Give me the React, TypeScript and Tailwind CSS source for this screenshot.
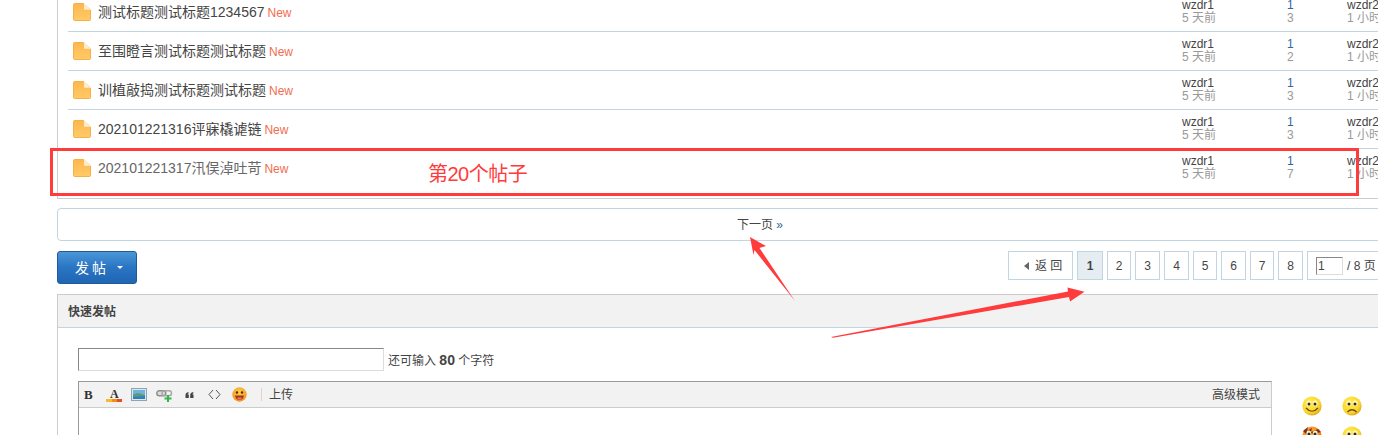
const font = { fontFamily: '"Liberation Sans", "Noto Sans CJK SC", sans-serif' };

const rows = [
  { title: "测试标题测试标题1234567", replies: 3 },
  { title: "至围瞪言测试标题测试标题", replies: 2 },
  { title: "训植敲捣测试标题测试标题", replies: 3 },
  { title: "202101221316评寐橇谑链", replies: 3 },
  { title: "202101221317汛俣淖吐苛", replies: 7 },
];

const pages = [
  { n: 1, w: "w-[26px]" },
  { n: 2, w: "w-[24px]" },
  { n: 3, w: "w-[25px]" },
  { n: 4, w: "w-[25px]" },
  { n: 5, w: "w-[24px]" },
  { n: 6, w: "w-[25px]" },
  { n: 7, w: "w-[24px]" },
  { n: 8, w: "w-[25px]" },
];

function FileIcon() {
  return (
    <svg width="18" height="18" viewBox="0 0 18 18" className="shrink-0">
      <defs>
        <linearGradient id="fileFill" x1="0" y1="0" x2="0" y2="1">
          <stop offset="0" stopColor="#fdb64f" />
          <stop offset="1" stopColor="#ffcb66" />
        </linearGradient>
      </defs>
      <path d="M1.5 0.5H10.5L17.5 7V16.5a1 1 0 0 1-1 1H1.5a1 1 0 0 1-1-1V1.5a1 1 0 0 1 1-1Z" fill="url(#fileFill)" stroke="#f5b04a" />
      <path d="M11 0.5L17.5 6.8H11Z" fill="#fdeecb" />
    </svg>
  );
}

function Smiley({ kind }: { kind: "smile" | "sad" | "angry" | "shock" }) {
  const id = `face-${kind}`;
  return (
    <svg width="20" height="20" viewBox="0 0 20 20" className="overflow-visible">
      <defs>
        <radialGradient id={id} cx="0.4" cy="0.35" r="0.7">
          <stop offset="0" stopColor={kind === "angry" ? "#fbb03b" : "#fff04a"} />
          <stop offset="0.7" stopColor={kind === "angry" ? "#f58a1f" : "#fbd52a"} />
          <stop offset="1" stopColor={kind === "angry" ? "#d9601a" : "#d9a020"} />
        </radialGradient>
      </defs>
      <circle cx="10" cy="10" r="9.6" fill={`url(#${id})`} />
      {kind === "angry" && <path d="M1 5L6 1L5 5L10 2L9 6L16 3L19 6L12 8L8 7L5 9Z" fill="#8a2a10" />}
      <ellipse cx="6.8" cy="7.4" rx="2.4" ry="2.8" fill="#fff6d0" />
      <ellipse cx="13.200" cy="7.4" rx="2.4" ry="2.8" fill="#fff6d0" />
      <circle cx="7" cy="8" r="1.5" fill="#3a2a10" />
      <circle cx="13" cy="8" r="1.5" fill="#3a2a10" />
      {kind === "sad" ? (
        <path d="M5.500 16Q10 11.500 14.500 16" fill="none" stroke="#6b4a10" strokeWidth="1.200" />
      ) : (
        <path d="M4 12Q10 18.500 16 12" fill="none" stroke="#6b4a10" strokeWidth="1.200" />
      )}
    </svg>
  );
}

function Toolbar() {
  return (
    <div className="flex h-[26px] items-center border-b border-[#cccccc] bg-[#f2f2f2] text-xs text-[#444]">
      <svg width="16" height="16" viewBox="0 0 16 16" className="ml-[2px]">
        <text x="3" y="11.500" fontSize="13" fontWeight="700" fontFamily="Liberation Serif" fill="#333">B</text>
      </svg>
      <svg width="16" height="18" viewBox="0 0 16 18" className="ml-[9px]">
        <text x="4" y="12" fontSize="12" fontWeight="700" fontFamily="Liberation Serif" fill="#333">A</text>
        <rect x="0" y="13" width="6" height="3" fill="#fbb829" />
        <rect x="6" y="13" width="5" height="3" fill="#f58a1f" />
        <rect x="11" y="13" width="5" height="3" fill="#e2531a" />
      </svg>
      <svg width="16" height="13" viewBox="0 0 16 13" className="ml-[9px]">
        <rect x="0.5" y="0.5" width="15" height="12" fill="#dfe8ee" stroke="#8ea3b3" />
        <rect x="2" y="2" width="12" height="9" fill="#6fb3dc" />
        <path d="M2 6.500L7 5L14 7V11H2Z" fill="#5a9a78" />
        <path d="M2 9L14 8V11H2Z" fill="#2f7fc0" />
      </svg>
      <svg width="17" height="15" viewBox="0 0 17 15" className="ml-[9px] mt-[3px]">
        <rect x="0.800" y="1.800" width="9" height="5" rx="2.500" fill="#ddd" stroke="#8f8f8f" strokeWidth="1.500" />
        <rect x="6" y="1.800" width="9.500" height="5" rx="2.500" fill="none" stroke="#a8a8a8" strokeWidth="1.500" />
        <path d="M11 6h2v2.500h2.500v2H13V13h-2v-2.500H8.500v-2H11Z" fill="#35b44a" />
      </svg>
      <svg width="9" height="8" viewBox="0 0 9 8" className="ml-[12px]">
        <path d="M0.500 7V4Q0.500 1.500 3.500 1V2.500Q2.500 2.800 2.500 3.500H3.800V7ZM5.200 7V4Q5.200 1.500 8.300 1V2.500Q7.300 2.800 7.300 3.500H8.500V7Z" fill="#444" />
      </svg>
      <svg width="13" height="11" viewBox="0 0 13 11" className="ml-[14px]">
        <path d="M5 1L1 5.500L5 10M8 1L12 5.500L8 10" fill="none" stroke="#555" strokeWidth="1" />
      </svg>
      <svg width="15" height="15" viewBox="0 0 15 15" className="ml-[11px]">
        <defs>
          <radialGradient id="tongueFace" cx="0.5" cy="0.35" r="0.7">
            <stop offset="0" stopColor="#fdd24a" />
            <stop offset="1" stopColor="#ee8a1c" />
          </radialGradient>
        </defs>
        <circle cx="7.500" cy="7.500" r="7.200" fill="url(#tongueFace)" />
        <circle cx="5" cy="5.500" r="1.200" fill="#5a2a08" />
        <circle cx="10" cy="5.500" r="1.200" fill="#5a2a08" />
        <path d="M3 8.500H12Q11 13 7.500 13Q4 13 3 8.500Z" fill="#a8341a" />
        <path d="M5.500 10.500H9.500V12.500H5.500Z" fill="#f37a5a" />
      </svg>
      <span className="ml-[14px] h-[13px] w-px bg-[#ecd0c8]" />
      <span className="ml-[7px]">上传</span>
      <span className="ml-auto mr-[11px]">高级模式</span>
    </div>
  );
}

export default function App() {
  return (
    <div className="relative h-[435px] w-[1378px] overflow-hidden bg-white text-xs text-[#444]" style={font}>
      <div className="-mt-[7px] ml-[57px] w-[1406px]">
        <div className="border-b border-l border-[#cccccc] pb-[11px] pl-[10px]">
          {rows.map((r, i) => (
            <div
              key={r.title}
              className={`flex items-center pl-[5px] ${i < rows.length - 1 ? "h-[39px] border-b border-[#c2d5e3]" : "h-[38px]"}`}
            >
              <FileIcon />
              <span className={`ml-[7px] text-sm ${i === 4 ? "text-[#666]" : "text-[#444]"}`}>{r.title}</span>
              <span className="ml-[3px] mt-[2px] text-xs text-[#f26c4f]">New</span>
              <div className="ml-auto flex w-[281px] shrink-0 leading-[13px]">
                <div className="w-[105px]">
                  <div className="text-[#444]">wzdr1</div>
                  <div className="text-[#999]">5 天前</div>
                </div>
                <div className="w-[60px]">
                  <div className="text-[#369]">1</div>
                  <div className="text-[#999]">{r.replies}</div>
                </div>
                <div className="w-[116px] whitespace-nowrap">
                  <div className="text-[#444]">wzdr2</div>
                  <div className="text-[#999]">1 小时前</div>
                </div>
              </div>
            </div>
          ))}
        </div>

        <div className="mt-[9px] flex h-[33px] items-center justify-center rounded-[4px] border border-[#c2d5e3] text-xs text-[#444]">
          下一页&nbsp;<span className="text-[#369]">»</span>
        </div>

        <div className="mt-[10px] flex items-start justify-between">
          <button className="flex h-[33px] w-[80px] items-center justify-start rounded-[3px] border border-[#235994] bg-gradient-to-b from-[#4a96d8] via-[#2a75c2] to-[#1f66b4] pl-[17px] text-sm tracking-[3px] text-white">
            发帖
            <span className="ml-[8px] h-0 w-0 border-x-[3px] border-t-[3px] border-x-transparent border-t-white" />
          </button>
          <div className="flex gap-1 text-xs text-[#444]">
            <div className="flex h-[29px] w-[65px] items-center border border-[#c2d5e3] pl-[15px]">
              <span className="mr-[6px] h-0 w-0 border-y-[4px] border-r-[5px] border-y-transparent border-r-[#666]" />
              返 回
            </div>
            {pages.map((p) => (
              <div
                key={p.n}
                className={`flex h-[29px] items-center justify-center border border-[#c2d5e3] ${p.w} ${p.n === 1 ? "bg-[#e5edf2] font-bold" : ""}`}
              >
                {p.n}
              </div>
            ))}
            <div className="flex h-[29px] w-[156px] items-center border border-[#c2d5e3] pl-2">
              <input
                readOnly
                value="1"
                className="h-[18px] w-[27px] border border-t-[#888] border-r-[#ddd] border-b-[#ddd] border-l-[#888] px-[1px] text-xs text-[#444]"
              />
              <span className="ml-1">/ 8 页</span>
            </div>
          </div>
        </div>

        <div className="mt-[10px] border-l border-[#cccccc]">
          <div className="flex h-[34px] items-center border-t border-b border-t-[#cccccc] border-b-[#c2d5e3] bg-[#f2f2f2] pl-[10px] pt-[2px] text-xs font-bold text-[#444]">
            快速发帖
          </div>
          <div className="flex pl-5 pt-5">
            <div className="w-[1194px] shrink-0">
              <div className="flex items-center">
                <div className="h-[23px] w-[306px] border border-t-[#888] border-r-[#ddd] border-b-[#ddd] border-l-[#888]" />
                <span className="ml-1">
                  还可输入 <b className="text-sm">80</b> 个字符
                </span>
              </div>
              <div className="mt-[10px] h-[60px] border border-r-[#cccccc] border-t-[#999] border-l-[#999] border-b-transparent">
                <Toolbar />
              </div>
            </div>
            <div className="ml-[30px] grid w-[80px] grid-cols-2 gap-y-[10px] pt-[48px]">
              <Smiley kind="smile" />
              <Smiley kind="sad" />
              <Smiley kind="angry" />
              <Smiley kind="shock" />
            </div>
          </div>
        </div>
      </div>

      {/* hand-drawn annotations over the page */}
      <div className="absolute left-[50px] top-[148px] h-[48px] w-[1309px] border-[3px] border-[#ff3b3b]" />
      <span className="absolute left-[428px] top-[159px] text-xl leading-[30px] tracking-[-0.5px] text-[#ff3b3b]">第20个帖子</span>
      <svg className="absolute left-0 top-0" width="1378" height="435" viewBox="0 0 1378 435">
        <polygon points="750,237 766,246 759.500,248 795,301 754.500,250 753.500,255" fill="#ff3b3b" />
        <polygon points="831,337 1068,291.500 1067.500,287.500 1084.500,291.700 1070,301.500 1069,297 833,337.800" fill="#ff3b3b" />
      </svg>
    </div>
  );
}
